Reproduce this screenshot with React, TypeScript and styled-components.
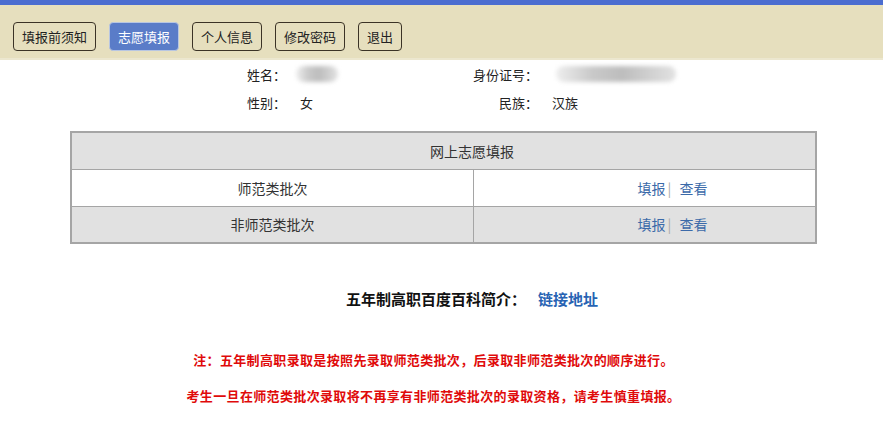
import React from 'react'
import styled, { createGlobalStyle } from 'styled-components'

const GlobalStyle = createGlobalStyle`
  body {
    margin: 0;
    background: #fff;
    font-family: "Noto Sans CJK SC", "Noto Sans", sans-serif;
    color: #222;
  }
`

const TopBar = styled.div`
  border-top: 5px solid #4b6dd0;
  background: #e6dfbe;
  border-bottom: 2px solid #ece7cf;
  height: 60px;
  box-sizing: border-box;
  padding: 17px 0 0 13px;
  display: flex;
  align-items: flex-start;
  gap: 13px;
`

const NavButton = styled.button<{ $active?: boolean }>`
  height: 29px;
  padding: 0 8px;
  font-family: inherit;
  font-size: 13px;
  line-height: 27px;
  border-radius: 4px;
  border: 1px solid ${(p) => (p.$active ? '#b8c6e2' : '#3b3326')};
  background: ${(p) => (p.$active ? '#5a7cc8' : '#e6dfbe')};
  color: ${(p) => (p.$active ? '#fff' : '#222')};
  cursor: pointer;
`

const Info = styled.div`
  display: grid;
  grid-template-columns: 292px 140px 108px auto;
  grid-auto-rows: 28px;
  align-items: center;
  font-size: 13px;
`

const Label = styled.span<{ $end?: boolean }>`
  text-align: right;
  padding-right: ${(p) => (p.$end ? '2px' : '6px')};
`

const Value = styled.span<{ $pad?: number }>`
  padding-left: ${(p) => p.$pad ?? 8}px;
  display: flex;
  align-items: center;
`

const Blur = styled.span<{ $w: number }>`
  display: inline-block;
  width: ${(p) => p.$w}px;
  height: 16px;
  border-radius: 8px;
  background: linear-gradient(90deg, #eee 0%, #c9c9c9 30%, #bdbdbd 55%, #e2e2e2 100%);
  filter: blur(2px);
`

const Table = styled.table`
  margin: 15px 0 0 70px;
  width: 747px;
  border-collapse: collapse;
  font-size: 14px;
  border: 2px solid #a5a5a5;
`

const Row = styled.tr<{ $shade?: boolean }>`
  height: 37px;
  background: ${(p) => (p.$shade ? '#e1e1e1' : '#fff')};
`

const Cell = styled.td<{ $offset?: number }>`
  border: 1px solid #a5a5a5;
  text-align: center;
  padding: 0 0 0 ${(p) => p.$offset ?? 0}px;
  color: #333;
`

const Link = styled.a`
  color: #3b6aa9;
  text-decoration: none;
`

const Sep = styled.span`
  color: #aaa;
  margin: 0 8px 0 2px;
`

const Intro = styled.div`
  margin-top: 45px;
  padding-left: 346px;
  line-height: 20px;
  font-size: 15px;
  font-weight: bold;
  color: #111;
`

const IntroLink = styled.a`
  color: #2763b3;
  text-decoration: none;
  margin-left: 12px;
`

const Notes = styled.div`
  margin-top: 33px;
  text-align: center;
  padding-right: 16px;
  font-size: 13px;
  font-weight: bold;
  letter-spacing: 0.35px;
  color: #e00a0a;
  line-height: 36px;
`

const navItems = ['填报前须知', '志愿填报', '个人信息', '修改密码', '退出']

const batches = ['师范类批次', '非师范类批次']

export default function App() {
  return (
    <>
      <GlobalStyle />
      <TopBar>
        {navItems.map((n) => (
          <NavButton key={n} $active={n === '志愿填报'}>{n}</NavButton>
        ))}
      </TopBar>
      <Info>
        <Label>姓名：</Label>
        <Value $pad={4}><Blur $w={42} /></Value>
        <Label $end>身份证号：</Label>
        <Value $pad={16}><Blur $w={120} /></Value>
        <Label>性别：</Label>
        <Value>女</Value>
        <Label $end>民族：</Label>
        <Value $pad={12}>汉族</Value>
      </Info>
      <Table>
        <tbody>
          <Row $shade>
            <Cell colSpan={2} $offset={57}>网上志愿填报</Cell>
          </Row>
          {batches.map((b, i) => (
            <Row key={b} $shade={i % 2 === 1}>
              <Cell style={{ width: 401 }}>{b}</Cell>
              <Cell $offset={56}>
                <Link href="#">填报</Link>
                <Sep>|</Sep>
                <Link href="#">查看</Link>
              </Cell>
            </Row>
          ))}
        </tbody>
      </Table>
      <Intro>
        五年制高职百度百科简介：
        <IntroLink href="#">链接地址</IntroLink>
      </Intro>
      <Notes>
        <div>注：五年制高职录取是按照先录取师范类批次，后录取非师范类批次的顺序进行。</div>
        <div>考生一旦在师范类批次录取将不再享有非师范类批次的录取资格，请考生慎重填报。</div>
      </Notes>
    </>
  )
}
